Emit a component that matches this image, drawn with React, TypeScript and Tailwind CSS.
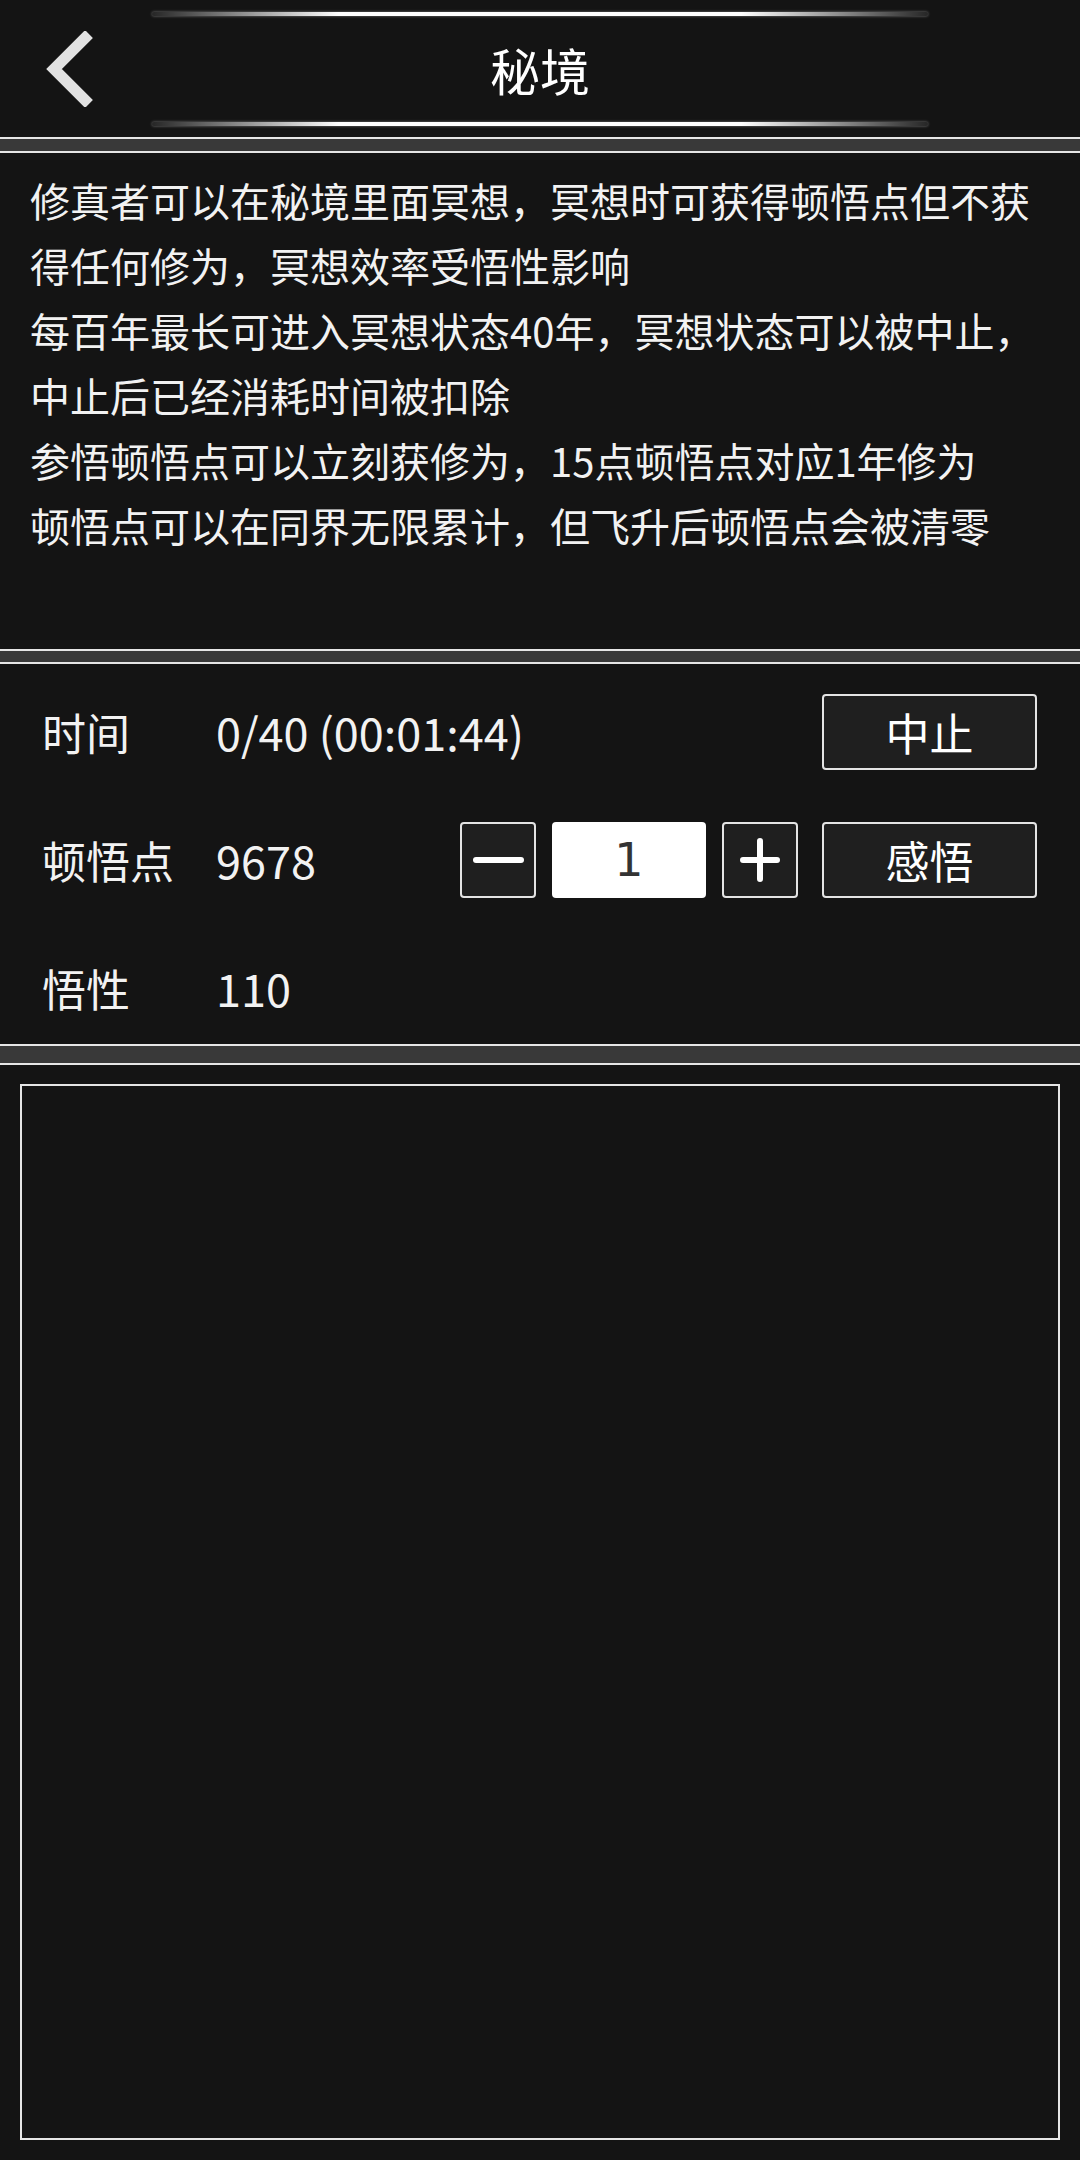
import React from 'react';

const FONT = "font-['Noto_Sans_CJK_SC','Noto_Sans',sans-serif]";

const INTRO_LINES = [
  '修真者可以在秘境里面冥想，冥想时可获得顿悟点但不获',
  '得任何修为，冥想效率受悟性影响',
  '每百年最长可进入冥想状态40年，冥想状态可以被中止，',
  '中止后已经消耗时间被扣除',
  '参悟顿悟点可以立刻获修为，15点顿悟点对应1年修为',
  '顿悟点可以在同界无限累计，但飞升后顿悟点会被清零',
];

function GlowLine() {
  return (
    <div className="h-[4px] w-[776px] rounded-full bg-[linear-gradient(90deg,rgba(255,255,255,0.08),#ffffff_24%,#ffffff_76%,rgba(255,255,255,0.08))] shadow-[0_0_3px_rgba(255,255,255,0.45)]" />
  );
}

function Band({ h }: { h: string }) {
  return <div className={`${h} bg-[#393939]`} />;
}

function DarkButton({ children, className = '' }: { children: React.ReactNode; className?: string }) {
  return (
    <button
      className={`flex h-[76px] items-center justify-center rounded-[4px] border-2 border-[#e4e4e4] bg-[#1f1f1f] text-[44px] leading-none text-white ${className}`}
    >
      {children}
    </button>
  );
}

export default function App() {
  return (
    <div className={`flex h-[2160px] w-[1080px] flex-col bg-[#393939] ${FONT} text-[#f2f2f2]`}>
      {/* header */}
      <header className="flex h-[139px] flex-col items-center justify-between border-b-2 border-[#e6e6e6] bg-[#141414] pt-[12px] pb-[11px]">
        <GlowLine />
        <div className="grid w-full grid-cols-[1fr_auto_1fr] items-center">
          <button className="justify-self-start pl-[36px]">
            <svg width="58" height="76" viewBox="0 0 58 76">
              <polyline
                points="53,3 18,38 53,73"
                fill="none"
                stroke="#e2e2e2"
                strokeWidth="11"
                strokeLinejoin="miter"
              />
            </svg>
          </button>
          <h1 className="text-[50px] leading-none font-normal text-white">秘境</h1>
          <div />
        </div>
        <GlowLine />
      </header>

      <Band h="h-[12px]" />

      {/* intro */}
      <section className="h-[500px] border-y-2 border-[#e6e6e6] bg-[#141414] pt-[15px] pl-[30px] text-[40px] leading-[65px]">
        {INTRO_LINES.map((line) => (
          <div key={line} className="whitespace-nowrap">
            {line}
          </div>
        ))}
      </section>

      <Band h="h-[11px]" />

      {/* stats */}
      <section className="flex h-[384px] flex-col gap-[52px] border-y-2 border-[#e6e6e6] bg-[#141414] pt-[30px] pr-[43px] pl-[42px]">
        <div className="flex h-[76px] items-center">
          <span className="w-[174px] text-[44px]">时间</span>
          <span className="text-[45px]">0/40 (00:01:44)</span>
          <DarkButton className="ml-auto w-[215px]">中止</DarkButton>
        </div>
        <div className="flex h-[76px] items-center">
          <span className="w-[174px] text-[44px]">顿悟点</span>
          <span className="text-[45px]">9678</span>
          <div className="ml-auto flex items-center">
            <DarkButton className="w-[76px]">
              <span className="h-[6px] w-[51px] rounded-full bg-white" />
            </DarkButton>
            <div className="mx-[16px] flex h-[76px] w-[154px] items-center justify-center rounded-[4px] bg-white font-['DejaVu_Sans',sans-serif] text-[46px] text-[#333333]">
              1
            </div>
            <DarkButton className="w-[76px]">
              <svg width="40" height="44" viewBox="0 0 40 44">
                <path d="M20 3 V41 M3 22 H37" stroke="#ffffff" strokeWidth="6" strokeLinecap="round" />
              </svg>
            </DarkButton>
            <DarkButton className="ml-[24px] w-[215px]">感悟</DarkButton>
          </div>
        </div>
        <div className="flex h-[76px] items-center">
          <span className="w-[174px] text-[44px]">悟性</span>
          <span className="text-[45px]">110</span>
        </div>
      </section>

      <Band h="h-[17px]" />

      {/* canvas area */}
      <section className="flex flex-1 border-t-2 border-[#e6e6e6] bg-[#141414] px-[20px] pt-[19px] pb-[20px]">
        <div className="flex-1 border-2 border-[#e6e6e6]" />
      </section>
    </div>
  );
}
